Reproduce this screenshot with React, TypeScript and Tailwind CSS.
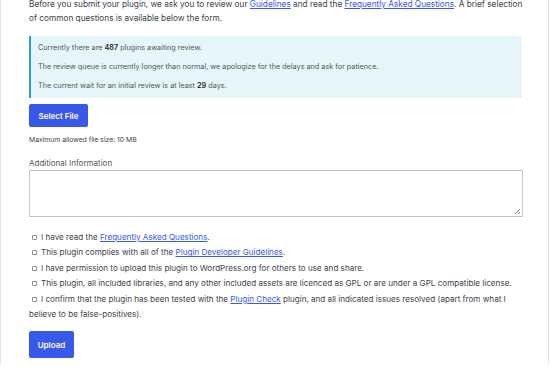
const linkCls = "text-[#3858e9] underline"

function Box() {
  return <span className="mr-[4px] ml-[3px] inline-block h-[5px] w-[5px] rounded-[1px] border border-[#8c8f94] bg-white align-[0px]" />
}

export default function App() {
  return (
    <div className="h-[367px] w-[550px] overflow-hidden bg-white font-['Inter','Liberation_Sans',sans-serif] text-[#3c434a]">
      <div className="h-full w-[549px] border-x border-[#e2e4e7] pl-[28px] pr-[26px]">
        <p className="mt-[-3px] w-[500px] text-[8.25px] leading-[14px]">
          Before you submit your plugin, we ask you to review our <a className={linkCls}>Guidelines</a> and read the{" "}
          <a className={linkCls}>Frequently Asked Questions</a>. A brief selection
          <br />
          of common questions is available below the form.
        </p>

        <div className="mt-[11px] flex flex-col gap-[9px] border-l-2 border-[#2f9bd6] bg-[#e5f5fa] py-[7px] pl-[7px] text-[7.25px] leading-[10px] text-[#50575e]">
          <p>
            Currently there are <b className="font-semibold text-[#1e1e1e]">487</b> plugins awaiting review.
          </p>
          <p>The review queue is currently longer than normal, we apologize for the delays and ask for patience.</p>
          <p>
            The current wait for an initial review is at least <b className="font-semibold text-[#1e1e1e]">29</b> days.
          </p>
        </div>

        <button className="mt-[6px] flex h-[23px] w-[59px] items-center justify-center rounded-[2px] bg-[#3858e9] text-[8px] font-semibold text-white">
          Select File
        </button>

        <p className="mt-[8px] text-[6.8px] leading-[10px]">Maximum allowed file size: 10 MB</p>

        <p className="mt-[13px] text-[8px] leading-[10px] text-[#50575e]">Additional Information</p>
        <div className="relative mt-[2px] h-[47px] w-[494px] border border-[#c3c4c7]">
          <svg className="absolute bottom-[1px] right-[1px]" width="7" height="7" viewBox="0 0 7 7">
            <path d="M6 1L1 6M6 4L4 6" stroke="#8c8f94" strokeWidth="1" />
          </svg>
        </div>

        <div className="mt-[13px] w-[500px] text-[8.1px] leading-[15.4px]">
          <p><Box />I have read the <a className={linkCls}>Frequently Asked Questions</a>.</p>
          <p><Box />This plugin complies with all of the <a className={linkCls}>Plugin Developer Guidelines</a>.</p>
          <p><Box />I have permission to upload this plugin to WordPress.org for others to use and share.</p>
          <p><Box />This plugin, all included libraries, and any other included assets are licenced as GPL or are under a GPL compatible license.</p>
          <p><Box />I confirm that the plugin has been tested with the <a className={linkCls}>Plugin Check</a> plugin, and all indicated issues resolved (apart from what I believe to be false-positives).</p>
        </div>

        <button className="mt-[9px] flex h-[27px] w-[45px] items-center justify-center rounded-[2px] bg-[#3858e9] text-[8px] font-semibold text-white">
          Upload
        </button>
      </div>
    </div>
  )
}
